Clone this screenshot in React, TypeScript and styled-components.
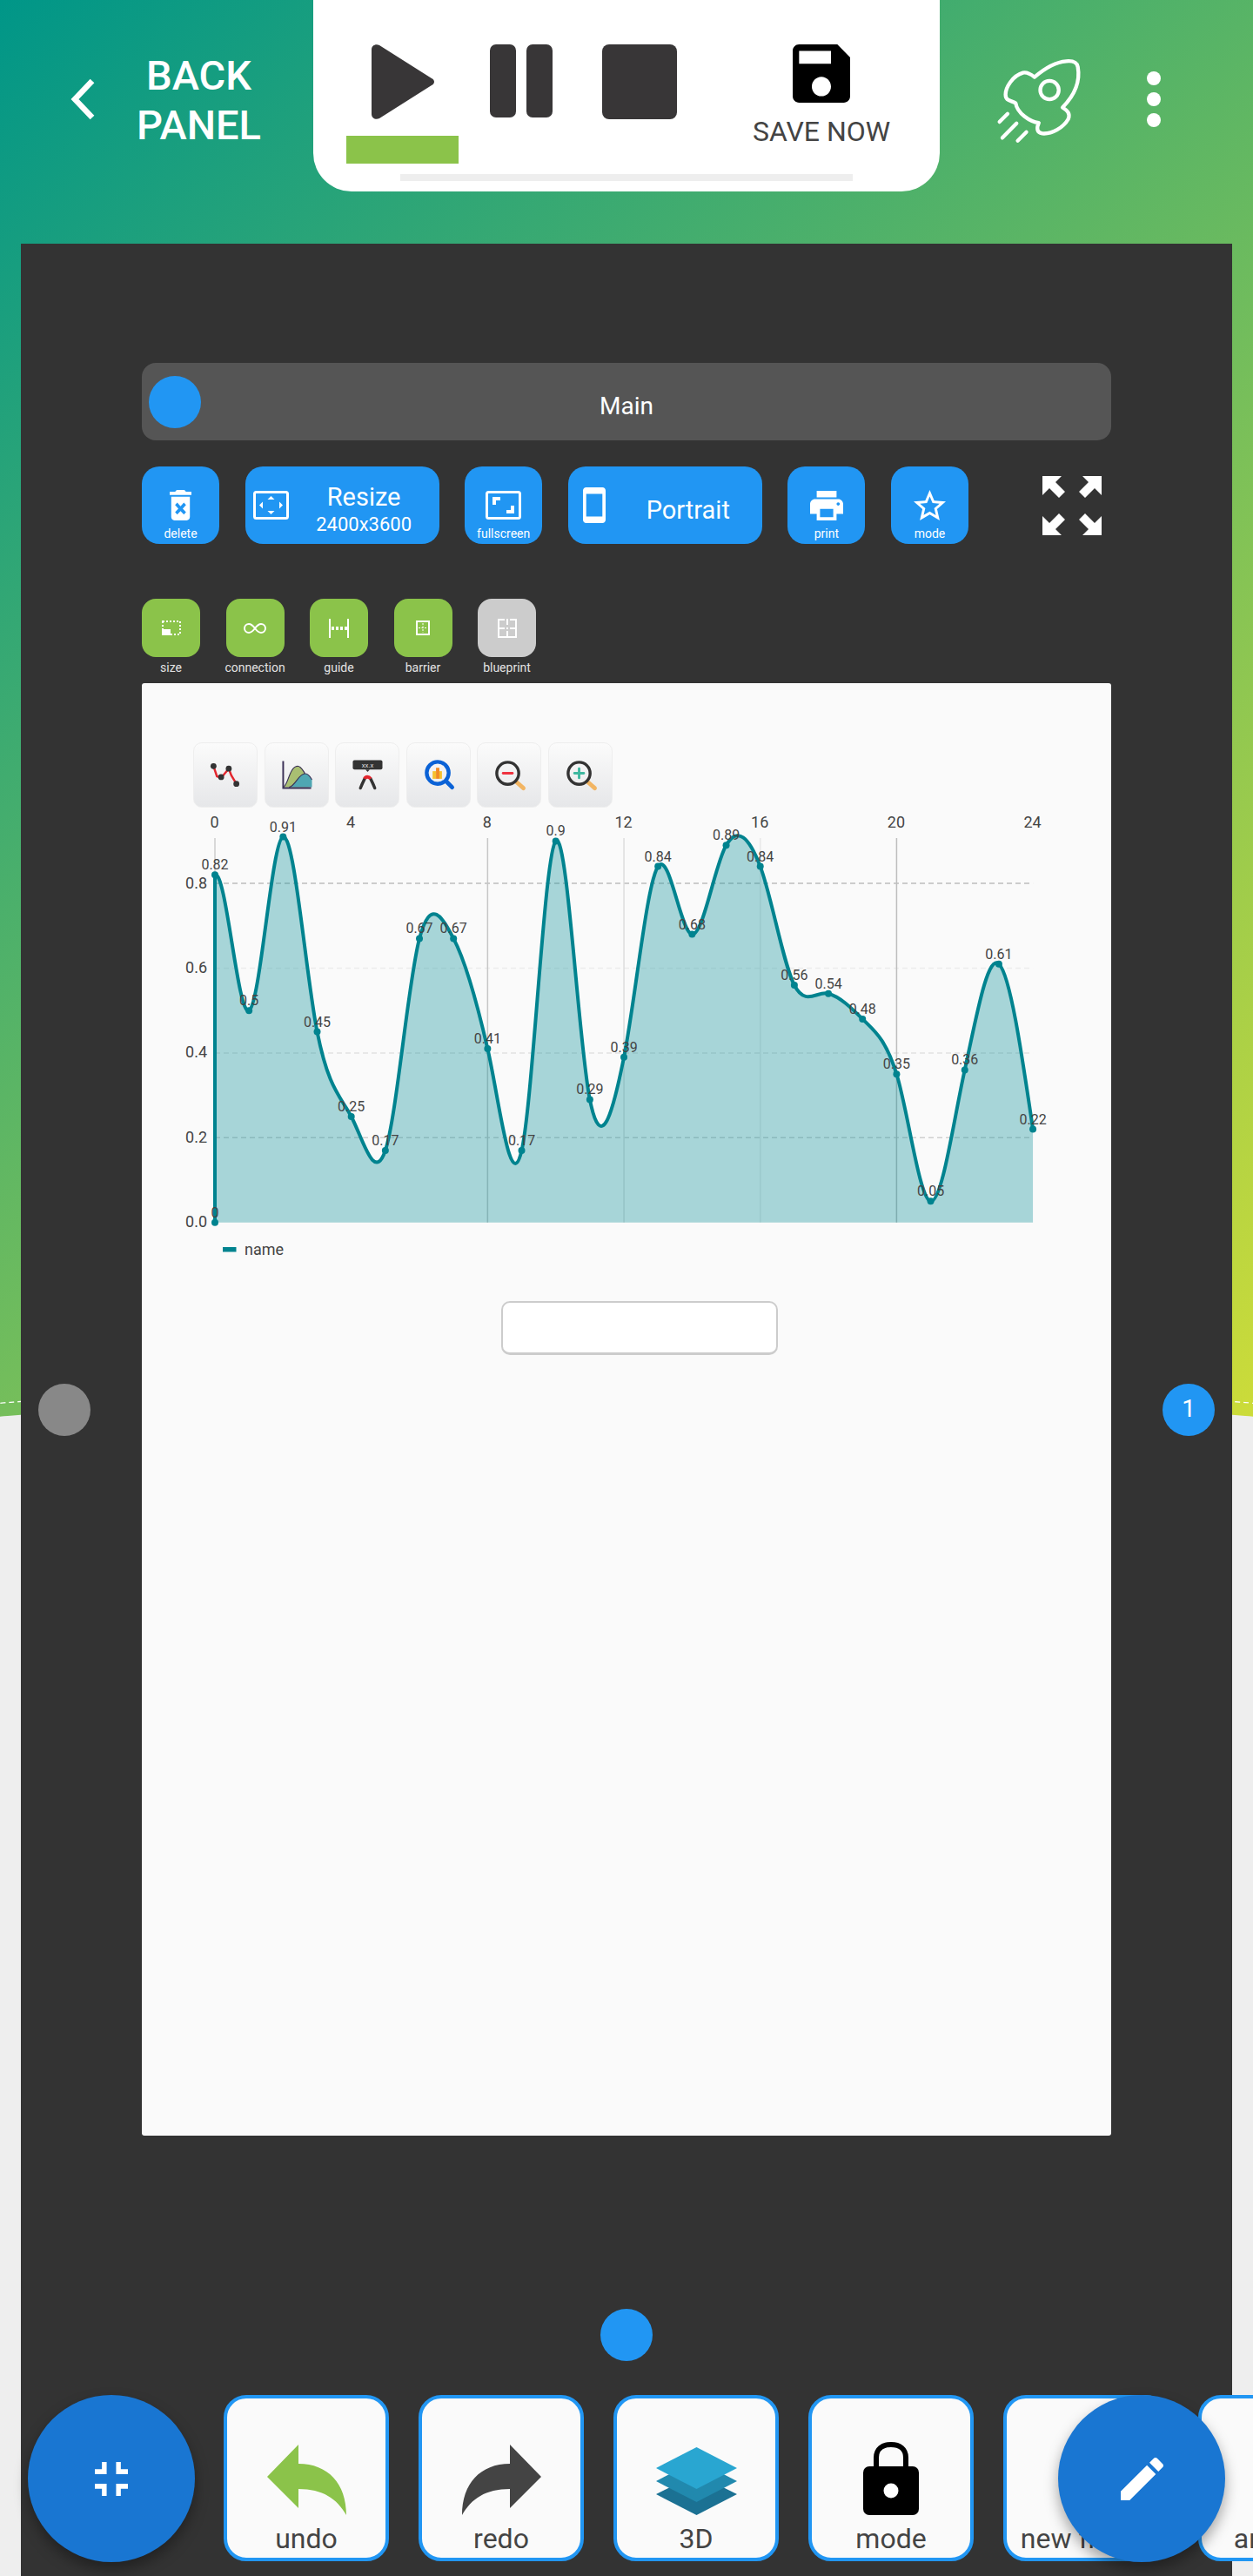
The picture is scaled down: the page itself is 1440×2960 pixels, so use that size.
import * as React from 'react';
import styled, { createGlobalStyle } from 'styled-components';

const GlobalStyle = createGlobalStyle`
    html, body {
        margin: 0;
        padding: 0;
        background: #eeeeee;
    }
    body {
        font-family: Roboto, "Liberation Sans", sans-serif;
    }
`;

// chart scale, in page pixels (the svg viewBox below uses the same numbers)
const X0 = 247;
const STEP = 39.17;
const Y0 = 1404.7;
const YSCALE = 487;
const VALUES = [0.82, 0.5, 0.91, 0.45, 0.25, 0.17, 0.67, 0.67, 0.41, 0.17, 0.9, 0.29, 0.39, 0.84, 0.68, 0.89, 0.84, 0.56, 0.54, 0.48, 0.35, 0.05, 0.36, 0.61, 0.22];

const px = (i: number) => X0 + STEP * i;
const py = (v: number) => Y0 - YSCALE * v;

// cubic through the values: slopes are half spline, half catmull-rom, which is what fits the curve
const splinePath = (startSlope: number) => {
    const y = VALUES.map(py);
    const n = y.length - 1;
    const c: number[] = new Array(n + 1).fill(0);
    const d: number[] = new Array(n + 1).fill(0);
    d[0] = startSlope;
    for (let i = 1; i <= n; i++) {
        const last = i === n;
        const a = 1;
        const b = last ? 2 : 4;
        const rhs = last ? (3 * (y[n] - y[n - 1])) / STEP : (3 * (y[i + 1] - y[i - 1])) / STEP;
        const m = b - a * c[i - 1];
        c[i] = last ? 0 : 1 / m;
        d[i] = (rhs - a * d[i - 1]) / m;
    }
    const slope: number[] = new Array(n + 1).fill(0);
    slope[n] = d[n];
    for (let i = n - 1; i >= 0; i--) {
        slope[i] = d[i] - c[i] * slope[i + 1];
    }
    for (let i = 1; i < n; i++) {
        slope[i] = 0.5 * slope[i] + 0.5 * ((y[i + 1] - y[i - 1]) / (2 * STEP));
    }
    let path = '';
    for (let i = 0; i < n; i++) {
        const h = STEP / 3;
        path += `C${px(i) + h} ${y[i] + slope[i] * h} ${px(i + 1) - h} ${y[i + 1] - slope[i + 1] * h} ${px(i + 1)} ${y[i + 1]}`;
    }
    return path;
};

const CURVE = splinePath(-0.45);

const Page = styled.div`
    position: relative;
    width: 1440px;
    height: 2960px;
    overflow: hidden;
    background: linear-gradient(140deg, #009688 0%, #cddc39 100%) no-repeat top / 100% 1640px;
    &::before {
        content: "";
        position: absolute;
        top: 1605px;
        left: -200px;
        right: -200px;
        height: 400px;
        background: #eeeeee;
        border-radius: 920px 920px 0 0 / 60px 60px 0 0;
    }
    &::after {
        content: "";
        position: absolute;
        top: 1589px;
        left: -200px;
        right: -200px;
        height: 100px;
        border-top: 2px dashed #ffffff;
        border-radius: 920px 920px 0 0 / 60px 60px 0 0;
    }
`;

const Header = styled.header`
    position: relative;
    z-index: 1;
    display: flex;
    height: 280px;
`;

const BackArea = styled.div`
    display: flex;
    width: 360px;
    padding: 58px 0 0 80px;
    box-sizing: border-box;
`;

const BackChevron = styled.svg`
    margin-top: 32px;
    flex-shrink: 0;
`;

const BackText = styled.div`
    width: 143px;
    margin-left: 47px;
    color: #ffffff;
    font-size: 47px;
    font-weight: 500;
    line-height: 57px;
    text-align: center;
    white-space: nowrap;
`;

const ControlPanel = styled.div`
    width: 720px;
    height: 220px;
    background: #ffffff;
    border-radius: 0 0 44px 44px;
`;

const ControlRow = styled.div`
    display: flex;
    height: 200px;
    padding-left: 38px;
    box-sizing: border-box;
`;

const ControlCell = styled.div<{ $width: number; $gap: number }>`
    display: flex;
    flex-direction: column;
    align-items: center;
    width: ${p => p.$width}px;
    margin-left: ${p => p.$gap}px;
    padding-top: 51px;
`;

const RunMark = styled.div`
    width: 129px;
    height: 32px;
    margin-top: 19px;
    background: #8bc34a;
`;

const SaveLabel = styled.div`
    margin-top: 17px;
    color: #444444;
    font-size: 32px;
    line-height: 32px;
    white-space: nowrap;
`;

const PanelBar = styled.div`
    width: 520px;
    height: 8px;
    margin: 0 auto;
    background: #eeeeee;
`;

const HeaderRight = styled.div`
    display: flex;
    padding: 67px 0 0 64px;
`;

const MoreDots = styled.svg`
    margin: 15px 0 0 71px;
`;

const Board = styled.main`
    position: relative;
    z-index: 1;
    height: 2680px;
    margin: 0 24px;
    padding: 137px 139px 0;
    box-sizing: border-box;
    background: #333333;
`;

const MainBar = styled.div`
    display: grid;
    grid-template-columns: 1fr auto 1fr;
    align-items: center;
    height: 89px;
    padding: 0 8px;
    box-sizing: border-box;
    background: #555555;
    border-radius: 16px;
    color: #ffffff;
    font-size: 28px;
`;

const MainTitle = styled.div`
    padding-top: 10px;
`;

const Knob = styled.div<{ $color?: string }>`
    width: 60px;
    height: 60px;
    border-radius: 50%;
    background: ${p => p.$color || '#2196f3'};
    color: #ffffff;
    font-size: 28px;
    line-height: 58px;
    text-align: center;
`;

const ActionRow = styled.div`
    display: flex;
    gap: 29.6px;
    height: 89px;
    margin-top: 30px;
`;

const ActionButton = styled.div<{ $wide?: boolean; $inset?: number }>`
    display: flex;
    flex-direction: ${p => (p.$wide ? 'row' : 'column')};
    align-items: center;
    width: ${p => (p.$wide ? 223 : 89)}px;
    padding: ${p => (p.$wide ? `0 0 0 ${p.$inset}px` : '27px 0 0')};
    box-sizing: border-box;
    background: #2196f3;
    border-radius: 20px;
    color: #ffffff;
`;

const IconSlot = styled.div`
    display: flex;
    align-items: center;
    justify-content: center;
    height: 35px;
`;

const ActionLabel = styled.div`
    margin-top: 7px;
    font-size: 14px;
    line-height: 16px;
    white-space: nowrap;
`;

const WideText = styled.div<{ $shift?: number }>`
    flex: 1;
    padding: 10px 0 0 ${p => p.$shift || 0}px;
    text-align: center;
    white-space: nowrap;
`;

const WideTitle = styled.div`
    font-size: 29px;
    line-height: 34px;
`;

const WideSub = styled.div`
    font-size: 22px;
    line-height: 30px;
`;

const ExpandGlyph = styled.svg`
    margin: 11px 11px 0 auto;
`;

const ToolRow = styled.div`
    display: flex;
    gap: 29.5px;
    height: 97px;
    margin-top: 63px;
`;

const ToolItem = styled.div`
    display: flex;
    flex-direction: column;
    align-items: center;
    width: 67px;
`;

const ToolTile = styled.div<{ $off?: boolean }>`
    width: 67px;
    height: 67px;
    background: ${p => (p.$off ? '#cccccc' : '#8bc34a')};
    border-radius: 16px;
`;

const ToolLabel = styled.div`
    margin-top: 4px;
    color: #e2e2e2;
    font-size: 14px;
    line-height: 16px;
    white-space: nowrap;
`;

const Sheet = styled.section`
    height: 1669px;
    padding-top: 68px;
    box-sizing: border-box;
    background: #fafafa;
    border-radius: 3px;
`;

const ChartTools = styled.div`
    display: flex;
    gap: 7.5px;
    margin-left: 59px;
`;

const ChartTool = styled.div`
    width: 74px;
    height: 75px;
    background: linear-gradient(180deg, #fbfbfb 0%, #e6e7e9 100%);
    border: 1px solid #eeeeee;
    box-sizing: border-box;
    border-radius: 10px;
`;

const ChartSvg = styled.svg`
    display: block;
    font-family: Roboto, "Liberation Sans", sans-serif;
`;

const NameInput = styled.div`
    width: 318px;
    height: 62px;
    margin: 35px 0 0 413px;
    box-sizing: border-box;
    background: #ffffff;
    border: 2px solid #cccccc;
    border-bottom-width: 3px;
    border-radius: 10px;
`;

const SideKnob = styled.div<{ $side: 'left' | 'right' }>`
    position: absolute;
    top: 1310px;
    ${p => p.$side}: 20px;
`;

const BottomKnob = styled.div`
    position: absolute;
    top: 2373px;
    left: 666px;
`;

const Dock = styled.footer`
    position: absolute;
    z-index: 2;
    top: 2752px;
    left: 0;
    display: flex;
    gap: 34px;
    padding-left: 257px;
`;

const DockCard = styled.div`
    display: flex;
    flex-direction: column;
    align-items: center;
    flex-shrink: 0;
    width: 190px;
    height: 191px;
    box-sizing: border-box;
    padding-top: 44px;
    background: #fafafa;
    border: 4px solid #2196f3;
    border-radius: 26px;
`;

const DockIcon = styled.div`
    display: flex;
    align-items: flex-end;
    justify-content: center;
    width: 100%;
    height: 90px;
`;

const DockLabel = styled.div`
    margin-top: 9px;
    color: #444444;
    font-size: 32px;
    line-height: 36px;
    white-space: nowrap;
`;

const Fab = styled.div<{ $side: 'left' | 'right' }>`
    position: absolute;
    z-index: 3;
    top: 2752px;
    ${p => p.$side}: 32px;
    display: flex;
    align-items: center;
    justify-content: center;
    width: 192px;
    height: 192px;
    background: #1976d2;
    border-radius: 50%;
    box-shadow: 0 8px 16px rgba(0, 0, 0, 0.35);
`;

interface GlyphProps {
    vb: string;
    d: string;
    w: number;
    h: number;
    color?: string;
}

const Glyph = ({ vb, d, w, h, color = '#ffffff' }: GlyphProps) => (
    <svg viewBox={vb} width={w} height={h} fill={color} preserveAspectRatio="none">
        <path d={d} />
    </svg>
);

const ResizeIcon = () => (
    <svg viewBox="0 0 41 33" width={41} height={33}>
        <rect x="1.5" y="1.5" width="38" height="30" rx="2" fill="none" stroke="#fff" strokeWidth="3" />
        <path d="M20.5 6l4 4h-8zM20.5 27l4-4h-8zM7 16.5l4-4v8zM34 16.5l-4-4v8z" fill="#fff" />
    </svg>
);

const FullscreenIcon = () => (
    <svg viewBox="0 0 41 33" width={41} height={33}>
        <rect x="1.5" y="1.5" width="38" height="30" rx="2" fill="none" stroke="#fff" strokeWidth="3" />
        <path d="M8 7h9v4h-5v5H8zM33 26h-9v-4h5v-5h4z" fill="#fff" />
    </svg>
);

const ExpandArrows = () => {
    const arrow = 'M0 0H22L15 7 26 18 19 25 8 14 0 22Z';
    return (
        <ExpandGlyph viewBox="0 0 68 68" width={68} height={68} fill="#fff">
            <path d={arrow} />
            <path d={arrow} transform="translate(68 0) scale(-1 1)" />
            <path d={arrow} transform="translate(0 68) scale(1 -1)" />
            <path d={arrow} transform="translate(68 68) scale(-1 -1)" />
        </ExpandGlyph>
    );
};

const TileSvg = ({ children }: { children: React.ReactNode }) => (
    <svg viewBox="0 0 67 67" width={67} height={67} fill="none" stroke="#fff" strokeWidth="2">
        {children}
    </svg>
);

const TOOLS = [
    {
        label: 'size',
        icon: (
            <>
                <rect x="24" y="26" width="20" height="15" strokeDasharray="2 2" />
                <rect x="23" y="35" width="10" height="7" fill="#fff" stroke="none" />
            </>
        ),
    },
    {
        label: 'connection',
        icon: <path d="M33 34c-3-4-5-5-7-5a5 5 0 0 0 0 10c2 0 4-1 7-5s5-5 7-5a5 5 0 0 1 0 10c-2 0-4-1-7-5z" />,
    },
    {
        label: 'guide',
        icon: (
            <>
                <path d="M23 23v22M44 23v22" />
                <path d="M25 34h18" strokeWidth="4" strokeDasharray="3 2" />
            </>
        ),
    },
    {
        label: 'barrier',
        icon: (
            <>
                <rect x="26" y="26" width="14" height="15" />
                <path d="M33 28v11M28 33.5h10" strokeWidth="1" strokeDasharray="2 1.5" />
            </>
        ),
    },
    {
        label: 'blueprint',
        off: true,
        icon: <path d="M31 24H24V44H44V24H37M34 23v7M34 37v8M24 34h7M37 34h7M33 34h2" />,
    },
];

const ChartIcon = ({ children }: { children: React.ReactNode }) => (
    <svg viewBox="0 0 74 75" width={72} height={73}>
        {children}
    </svg>
);

const CHART_ICONS = [
    <ChartIcon key="line">
        <path d="M23 27l4 12 5 2 9-11 3 8 6 10" fill="none" stroke="#e3262e" strokeWidth="2.5" />
        <g fill="#333">
            <circle cx="23" cy="27" r="3.5" />
            <circle cx="32" cy="40" r="3.5" />
            <circle cx="41" cy="30" r="3.5" />
            <circle cx="50" cy="48" r="3.5" />
        </g>
    </ChartIcon>,
    <ChartIcon key="area">
        <path d="M21 52c6-2 7-24 17-25 6 0 8 9 13 14v11z" fill="#a9bf72" />
        <path d="M28 52c8-2 11-16 19-16 4 0 6 4 8 7v9z" fill="#4fa7b3" />
        <path d="M28 52c8-2 11-16 19-16 4 0 6 4 8 7M21 52c6-2 7-24 17-25 4 0 6 5 9 9" fill="none" stroke="#3a3056" strokeWidth="1.2" />
        <path d="M21 21v32h33" fill="none" stroke="#3a3056" strokeWidth="2" />
    </ChartIcon>,
    <ChartIcon key="tip">
        <rect x="20" y="20" width="35" height="11" rx="2" fill="#333" />
        <path d="M35 31h5l-2.5 3z" fill="#333" />
        <text x="37.5" y="29" fontSize="8" fill="#ddd" textAnchor="middle">xx.x</text>
        <path d="M29 53c2-5 4-9 5-11M46 53c-2-5-4-9-5-11" fill="none" stroke="#333" strokeWidth="3.5" strokeLinecap="round" />
        <path d="M34 42c1-3 5-3 7 0" fill="none" stroke="#e3262e" strokeWidth="4" />
    </ChartIcon>,
    <ChartIcon key="find">
        <rect x="30" y="33" width="4" height="9" fill="#f6c02e" />
        <rect x="34" y="29" width="4" height="13" fill="#f08a24" />
        <rect x="38" y="33" width="3" height="9" fill="#f6c02e" />
        <circle cx="36" cy="35" r="13" fill="none" stroke="#0b62d6" strokeWidth="4.5" />
        <path d="M46 45l7 7" stroke="#0b62d6" strokeWidth="5" strokeLinecap="round" />
    </ChartIcon>,
    <ChartIcon key="out">
        <path d="M46 46l8 7" stroke="#f2b563" strokeWidth="5" strokeLinecap="round" />
        <circle cx="35.5" cy="35.5" r="13" fill="none" stroke="#333" strokeWidth="3.5" />
        <path d="M30 35.5h11" stroke="#ef3340" strokeWidth="3" strokeLinecap="round" />
    </ChartIcon>,
    <ChartIcon key="in">
        <path d="M46 46l8 7" stroke="#f2b563" strokeWidth="5" strokeLinecap="round" />
        <circle cx="35.5" cy="35.5" r="13" fill="none" stroke="#333" strokeWidth="3.5" />
        <path d="M30 35.5h11M35.5 30v11" stroke="#3fb8a0" strokeWidth="3" strokeLinecap="round" />
    </ChartIcon>,
];

const GRID_Y = [
    { v: 0.8, color: '#bdbdbd' },
    { v: 0.6, color: '#ececec' },
    { v: 0.4, color: '#e2e2e2' },
    { v: 0.2, color: '#cfcfcf' },
];

const GRID_X = [
    { h: 0, color: '#cccccc' },
    { h: 8, color: '#c6c6c6' },
    { h: 12, color: '#dddddd' },
    { h: 16, color: '#e8e8e8' },
    { h: 20, color: '#bdbdbd' },
];

const Chart = () => (
    <ChartSvg viewBox="163 928 1114 532" width={1114} height={532}>
        {GRID_Y.map(g => (
            <line key={g.v} x1={X0} x2={px(24)} y1={py(g.v)} y2={py(g.v)} stroke={g.color} strokeWidth="1.5" strokeDasharray="6 4" />
        ))}
        {GRID_X.map(g => (
            <line key={g.h} x1={px(g.h)} x2={px(g.h)} y1={963} y2={Y0} stroke={g.color} strokeWidth="1.5" />
        ))}
        <path d={`M${px(0)} ${Y0}L${px(0)} ${py(VALUES[0])}${CURVE}L${px(24)} ${Y0}Z`} fill="#008b95" fillOpacity="0.33" />
        <path d={`M${px(0)} ${Y0}L${px(0)} ${py(VALUES[0])}${CURVE}`} fill="none" stroke="#00838f" strokeWidth="4" />
        <circle cx={px(0)} cy={Y0} r="4" fill="#00838f" />
        {VALUES.map((v, i) => (
            <circle key={i} cx={px(i)} cy={py(v)} r="4" fill="#00838f" />
        ))}
        <g fontSize="16" fill="#444" textAnchor="middle">
            <text x={px(0)} y={Y0 - 6}>0</text>
            {VALUES.map((v, i) => (
                <text key={i} x={px(i)} y={py(v) - 6}>{v}</text>
            ))}
        </g>
        <g fontSize="18" fill="#444" textAnchor="middle">
            {[0, 4, 8, 12, 16, 20, 24].map(h => (
                <text key={h} x={px(h) - 0.5} y={950.5}>{h}</text>
            ))}
        </g>
        <g fontSize="18" fill="#444" textAnchor="end">
            {['0.8', '0.6', '0.4', '0.2', '0.0'].map((t, i) => (
                <text key={t} x={238} y={py(0.8 - i * 0.2) + 5.5}>{t}</text>
            ))}
        </g>
        <rect x="256" y="1433" width="15.5" height="5.5" fill="#00838f" />
        <text x="281" y="1442" fontSize="18" fill="#444">name</text>
    </ChartSvg>
);

const UndoIcon = ({ color, flip }: { color: string; flip?: boolean }) => (
    <svg viewBox="0 0 91 81" width={91} height={81} style={flip ? { transform: 'scaleX(-1)' } : undefined}>
        <path d="M0 37L36 0V22C70 22 91 45 91 81 80 62 64 51 36 51V73Z" fill={color} />
    </svg>
);

const LayersIcon = () => (
    <svg viewBox="0 0 95 78" width={95} height={78} strokeLinejoin="round">
        <path d="M47.5 31L94 54 47.5 78 1 54Z" fill="#1b7193" />
        <path d="M47.5 15L94 39 47.5 63 1 39Z" fill="#2189ae" />
        <path d="M47.5 0L94 24 47.5 48 1 24Z" fill="#29a6d1" />
    </svg>
);

const LockIcon = () => (
    <svg viewBox="0 0 64 84" width={64} height={84}>
        <path d="M15 32V18C15 8 22 3 32 3s17 5 17 15v14" fill="none" stroke="#000" strokeWidth="6" />
        <rect x="0" y="28" width="64" height="56" rx="7" fill="#000" />
        <circle cx="32" cy="56" r="8.5" fill="#fff" />
    </svg>
);

const DOCK = [
    { label: 'undo', icon: <UndoIcon color="#8bc34a" /> },
    { label: 'redo', icon: <UndoIcon color="#444444" flip /> },
    { label: '3D', icon: <LayersIcon /> },
    { label: 'mode', icon: <LockIcon /> },
    { label: 'new frame', icon: null },
    {
        label: 'arrange',
        icon: (
            <svg viewBox="0 0 90 72" width={90} height={72}>
                <rect x="13" y="0" width="64" height="72" fill="#000" />
            </svg>
        ),
    },
];

const App = () => (
    <Page>
        <GlobalStyle />
        <Header>
            <BackArea>
                <BackChevron viewBox="0 0 30 48" width={30} height={48} fill="none" stroke="#fff" strokeWidth="6.5">
                    <path d="M26 3L6 24l20 21" />
                </BackChevron>
                <BackText>BACK<br />PANEL</BackText>
            </BackArea>
            <ControlPanel>
                <ControlRow>
                    <ControlCell $width={129} $gap={0}>
                        <svg viewBox="0 0 72 86" width={72} height={86}>
                            <path d="M0 6C0 1 5-1 9 1L69 39C73 41 73 45 69 47L9 85C5 87 0 85 0 80Z" fill="#383637" />
                        </svg>
                        <RunMark />
                    </ControlCell>
                    <ControlCell $width={72} $gap={36}>
                        <svg viewBox="0 0 72 84" width={72} height={84} fill="#383637">
                            <rect x="0" y="0" width="30" height="84" rx="7" />
                            <rect x="42" y="0" width="30" height="84" rx="7" />
                        </svg>
                    </ControlCell>
                    <ControlCell $width={86} $gap={57}>
                        <svg viewBox="0 0 86 86" width={86} height={86}>
                            <rect width="86" height="86" rx="8" fill="#383637" />
                        </svg>
                    </ControlCell>
                    <ControlCell $width={160} $gap={86}>
                        <Glyph
                            vb="3 3 18 18"
                            w={66}
                            h={67}
                            color="#000"
                            d="M17 3H5c-1.11 0-2 .9-2 2v14c0 1.1.89 2 2 2h14c1.1 0 2-.9 2-2V7l-4-4zm-5 16c-1.66 0-3-1.34-3-3s1.34-3 3-3 3 1.34 3 3-1.34 3-3 3zm3-10H5V5h10v4z"
                        />
                        <SaveLabel>SAVE NOW</SaveLabel>
                    </ControlCell>
                </ControlRow>
                <PanelBar />
            </ControlPanel>
            <HeaderRight>
                <svg viewBox="70 15 310 295" width={103} height={98} fill="none" stroke="#fff" strokeWidth="13" strokeLinecap="round" strokeLinejoin="round">
                    <path d="M205 80C240 50 275 28 315 25 340 23 352 28 355 45 362 85 352 135 302 185 318 195 330 205 322 225 305 255 265 278 232 275 212 272 212 255 220 238 190 235 145 205 140 170 125 160 105 165 105 140 105 115 130 75 165 65 182 62 195 72 205 80Z" />
                    <circle cx="257" cy="125" r="32" />
                    <path d="M84 235L112 207M94 290L143 240M147 300L177 270" />
                </svg>
                <MoreDots viewBox="0 0 16 64" width={16} height={64} fill="#fff">
                    <circle cx="8" cy="8" r="8" />
                    <circle cx="8" cy="32" r="8" />
                    <circle cx="8" cy="56" r="8" />
                </MoreDots>
            </HeaderRight>
        </Header>
        <Board>
            <MainBar>
                <Knob />
                <MainTitle>Main</MainTitle>
            </MainBar>
            <ActionRow>
                <ActionButton>
                    <IconSlot>
                        <Glyph
                            vb="5 3 14 18"
                            w={25}
                            h={35}
                            d="M6 19c0 1.1.9 2 2 2h8c1.1 0 2-.9 2-2V7H6v12zm2.46-7.12l1.41-1.41L12 12.59l2.12-2.12 1.41 1.41L13.41 14l2.12 2.12-1.41 1.41L12 15.41l-2.12 2.12-1.41-1.41L10.59 14l-2.13-2.12zM15.5 4l-1-1h-5l-1 1H5v2h14V4z"
                        />
                    </IconSlot>
                    <ActionLabel>delete</ActionLabel>
                </ActionButton>
                <ActionButton $wide $inset={9}>
                    <ResizeIcon />
                    <WideText>
                        <WideTitle>Resize</WideTitle>
                        <WideSub>2400x3600</WideSub>
                    </WideText>
                </ActionButton>
                <ActionButton>
                    <IconSlot><FullscreenIcon /></IconSlot>
                    <ActionLabel>fullscreen</ActionLabel>
                </ActionButton>
                <ActionButton $wide $inset={17}>
                    <Glyph
                        vb="5 1 14 22"
                        w={26}
                        h={41}
                        d="M17 1.01L7 1c-1.1 0-2 .9-2 2v18c0 1.1.9 2 2 2h10c1.1 0 2-.9 2-2V3c0-1.1-.9-1.99-2-1.99zM17 19H7V5h10v14z"
                    />
                    <WideText $shift={10}>
                        <WideTitle>Portrait</WideTitle>
                    </WideText>
                </ActionButton>
                <ActionButton>
                    <IconSlot>
                        <Glyph
                            vb="2 3 20 18"
                            w={38}
                            h={34}
                            d="M19 8H5c-1.66 0-3 1.34-3 3v6h4v4h12v-4h4v-6c0-1.66-1.34-3-3-3zm-3 11H8v-5h8v5zm3-7c-.55 0-1-.45-1-1s.45-1 1-1 1 .45 1 1-.45 1-1 1zm-1-9H6v4h12V3z"
                        />
                    </IconSlot>
                    <ActionLabel>print</ActionLabel>
                </ActionButton>
                <ActionButton>
                    <IconSlot>
                        <Glyph
                            vb="2 2 20 19"
                            w={37}
                            h={35}
                            d="M22 9.24l-7.19-.62L12 2 9.19 8.63 2 9.24l5.46 4.73L5.82 21 12 17.27 18.18 21l-1.63-7.03L22 9.24zM12 15.4l-3.76 2.27 1-4.28-3.32-2.88 4.38-.38L12 6.1l1.71 4.04 4.38.38-3.32 2.88 1 4.28L12 15.4z"
                        />
                    </IconSlot>
                    <ActionLabel>mode</ActionLabel>
                </ActionButton>
                <ExpandArrows />
            </ActionRow>
            <ToolRow>
                {TOOLS.map(t => (
                    <ToolItem key={t.label}>
                        <ToolTile $off={t.off}>
                            <TileSvg>{t.icon}</TileSvg>
                        </ToolTile>
                        <ToolLabel>{t.label}</ToolLabel>
                    </ToolItem>
                ))}
            </ToolRow>
            <Sheet>
                <ChartTools>
                    {CHART_ICONS.map(icon => (
                        <ChartTool key={icon.key}>{icon}</ChartTool>
                    ))}
                </ChartTools>
                <Chart />
                <NameInput />
            </Sheet>
            <SideKnob $side="left"><Knob $color="#888888" /></SideKnob>
            <SideKnob $side="right"><Knob>1</Knob></SideKnob>
            <BottomKnob><Knob /></BottomKnob>
        </Board>
        <Dock>
            {DOCK.map(item => (
                <DockCard key={item.label}>
                    <DockIcon>{item.icon}</DockIcon>
                    <DockLabel>{item.label}</DockLabel>
                </DockCard>
            ))}
        </Dock>
        <Fab $side="left">
            <Glyph vb="5 5 14 14" w={38} h={39} d="M5 16h3v3h2v-5H5v2zm3-8H5v2h5V5H8v3zm6 11h2v-3h3v-2h-5v5zm2-11V5h-2v5h5V8h-3z" />
        </Fab>
        <Fab $side="right">
            <Glyph
                vb="3 3 18 18"
                w={49}
                h={49}
                d="M3 17.25V21h3.75L17.81 9.94l-3.75-3.75L3 17.25zM20.71 7.04c.39-.39.39-1.02 0-1.41l-2.34-2.34c-.39-.39-1.02-.39-1.41 0l-1.83 1.83 3.75 3.75 1.83-1.83z"
            />
        </Fab>
    </Page>
);

export default App;
